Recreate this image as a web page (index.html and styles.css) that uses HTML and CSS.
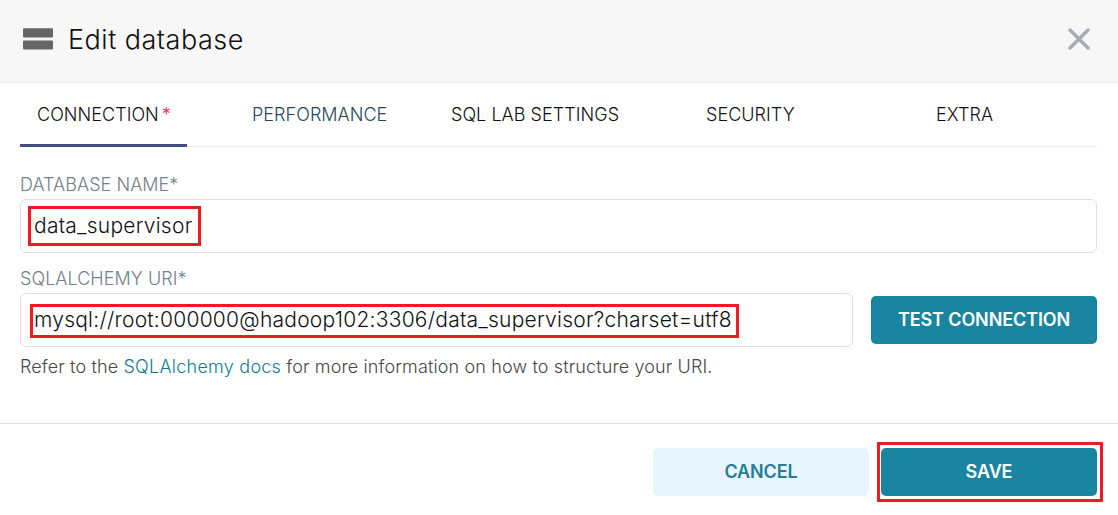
FILE: index.html
```html
<!DOCTYPE html>
<html lang="en">
<head>
<meta charset="utf-8">
<title>Edit database</title>
<link rel="stylesheet" href="styles.css">
</head>
<body>
<div class="modal">
  <header class="header">
    <svg class="db-icon" width="30" height="22" viewBox="0 0 30 22"><rect y=".2" width="30" height="9.2" rx="1"/><rect y="12.4" width="30" height="9.2" rx="1"/></svg>
    <h1 class="title">Edit database</h1>
    <svg class="close" width="22" height="22" viewBox="0 0 22 22"><path d="M2 2l18 18M20 2l-18 18"/></svg>
  </header>
  <main class="content">
    <nav class="tabs">
      <a class="tab tab-active"><span>CONNECTION</span><span class="required">*</span></a>
      <a class="tab tab-performance"><span>PERFORMANCE</span></a>
      <a class="tab tab-sql"><span>SQL LAB SETTINGS</span></a>
      <a class="tab tab-security"><span>SECURITY</span></a>
      <a class="tab tab-extra"><span>EXTRA</span></a>
    </nav>
    <label class="label">DATABASE NAME*</label>
    <div class="input"><span class="mark mark-name"><span class="value value-name">data_supervisor</span></span></div>
    <label class="label label-uri">SQLALCHEMY URI*</label>
    <div class="uri-row">
      <div class="input input-uri"><span class="mark mark-uri"><span class="value value-uri">mysql://root:000000@hadoop102:3306/data_supervisor?charset=utf8</span></span></div>
      <button class="button test"><span>TEST CONNECTION</span></button>
    </div>
    <p class="help"><span>Refer to the <a class="link">SQLAlchemy docs</a> for more information on how to structure your URI.</span></p>
  </main>
  <footer class="footer">
    <button class="button cancel"><span>CANCEL</span></button>
    <div class="save-mark"><button class="button save"><span>SAVE</span></button></div>
  </footer>
</div>
</body>
</html>
```

FILE: styles.css
```css
* { box-sizing: border-box; }
body { margin: 0; background: #fff; color: #111; font-family: Inter, sans-serif; font-weight: 300; }
.modal { width: 1118px; height: 515px; display: flex; flex-direction: column; overflow: hidden; }
.header { height: 83px; flex: none; display: flex; align-items: center; padding: 0 28px 4px 23px; background: #f7f7f7; border-bottom: 1px solid #efefef; }
.db-icon { fill: #666; }
.title { margin: 2px auto 0 15px; font-size: 27px; font-weight: 300; line-height: 36px; letter-spacing: .5px; }
.close { fill: none; stroke: #a7abbd; stroke-width: 3.4; stroke-linecap: round; }
.content { height: 340px; padding: 0 21px 0 20px; }
.tabs { height: 64px; display: flex; border-bottom: 1px solid #efefef; }
.tab { height: 64px; line-height: 64px; font-size: 18px; letter-spacing: .04px; white-space: nowrap; }
.tab-active { width: 167px; padding-left: 17px; border-bottom: 3px solid #444e7c; }
.required { color: #e04370; margin-left: 3px; font-weight: 400; }
.tab-performance { width: 199px; margin-left: 65px; color: #24485a; }
.tab-sql { width: 255px; }
.tab-security { width: 230px; }
.label { display: block; height: 52px; padding-top: 26px; line-height: 24px; font-size: 18px; letter-spacing: .05px; color: #75808a; }
.input { height: 54px; display: flex; align-items: flex-start; padding: 6px 7px; border: 1px solid #e0e0e0; border-radius: 6px; }
.mark { display: flex; align-items: center; border: 3px solid #ed1c24; white-space: nowrap; font-size: 21px; letter-spacing: .24px; }
.mark-name { width: 173px; height: 40px; padding: 0 0 1px 3px; }
.label-uri { height: 40px; padding-top: 14px; }
.uri-row { display: flex; gap: 18px; align-items: center; }
.input-uri { width: 833px; padding: 10px 9px; }
.mark-uri { width: 709px; height: 34px; padding: 0 0 3px 1px; }
.button { border: 0; padding: 0; border-radius: 5px; font: 600 18px/24px Inter, sans-serif; letter-spacing: -.12px; height: 48px; color: #fff; background: #1a85a0; white-space: nowrap; }
.test { width: 226px; }
.help { margin: 8px 0 0; font-size: 18px; line-height: 24px; letter-spacing: .13px; color: #484848; white-space: nowrap; }
.link { color: #147a94; font-weight: 300; letter-spacing: .25px; }
.footer { height: 92px; flex: none; display: flex; align-items: center; gap: 8px; padding: 4px 15px 0 653px; border-top: 1px solid #e0e0e0; }
.cancel { width: 216px; color: #287d96; background: #e8f5fa; }
.save-mark { width: 226px; height: 60px; padding: 3px 1px; border: 3px solid #ed1c24; }
.save { width: 216px; }
```
